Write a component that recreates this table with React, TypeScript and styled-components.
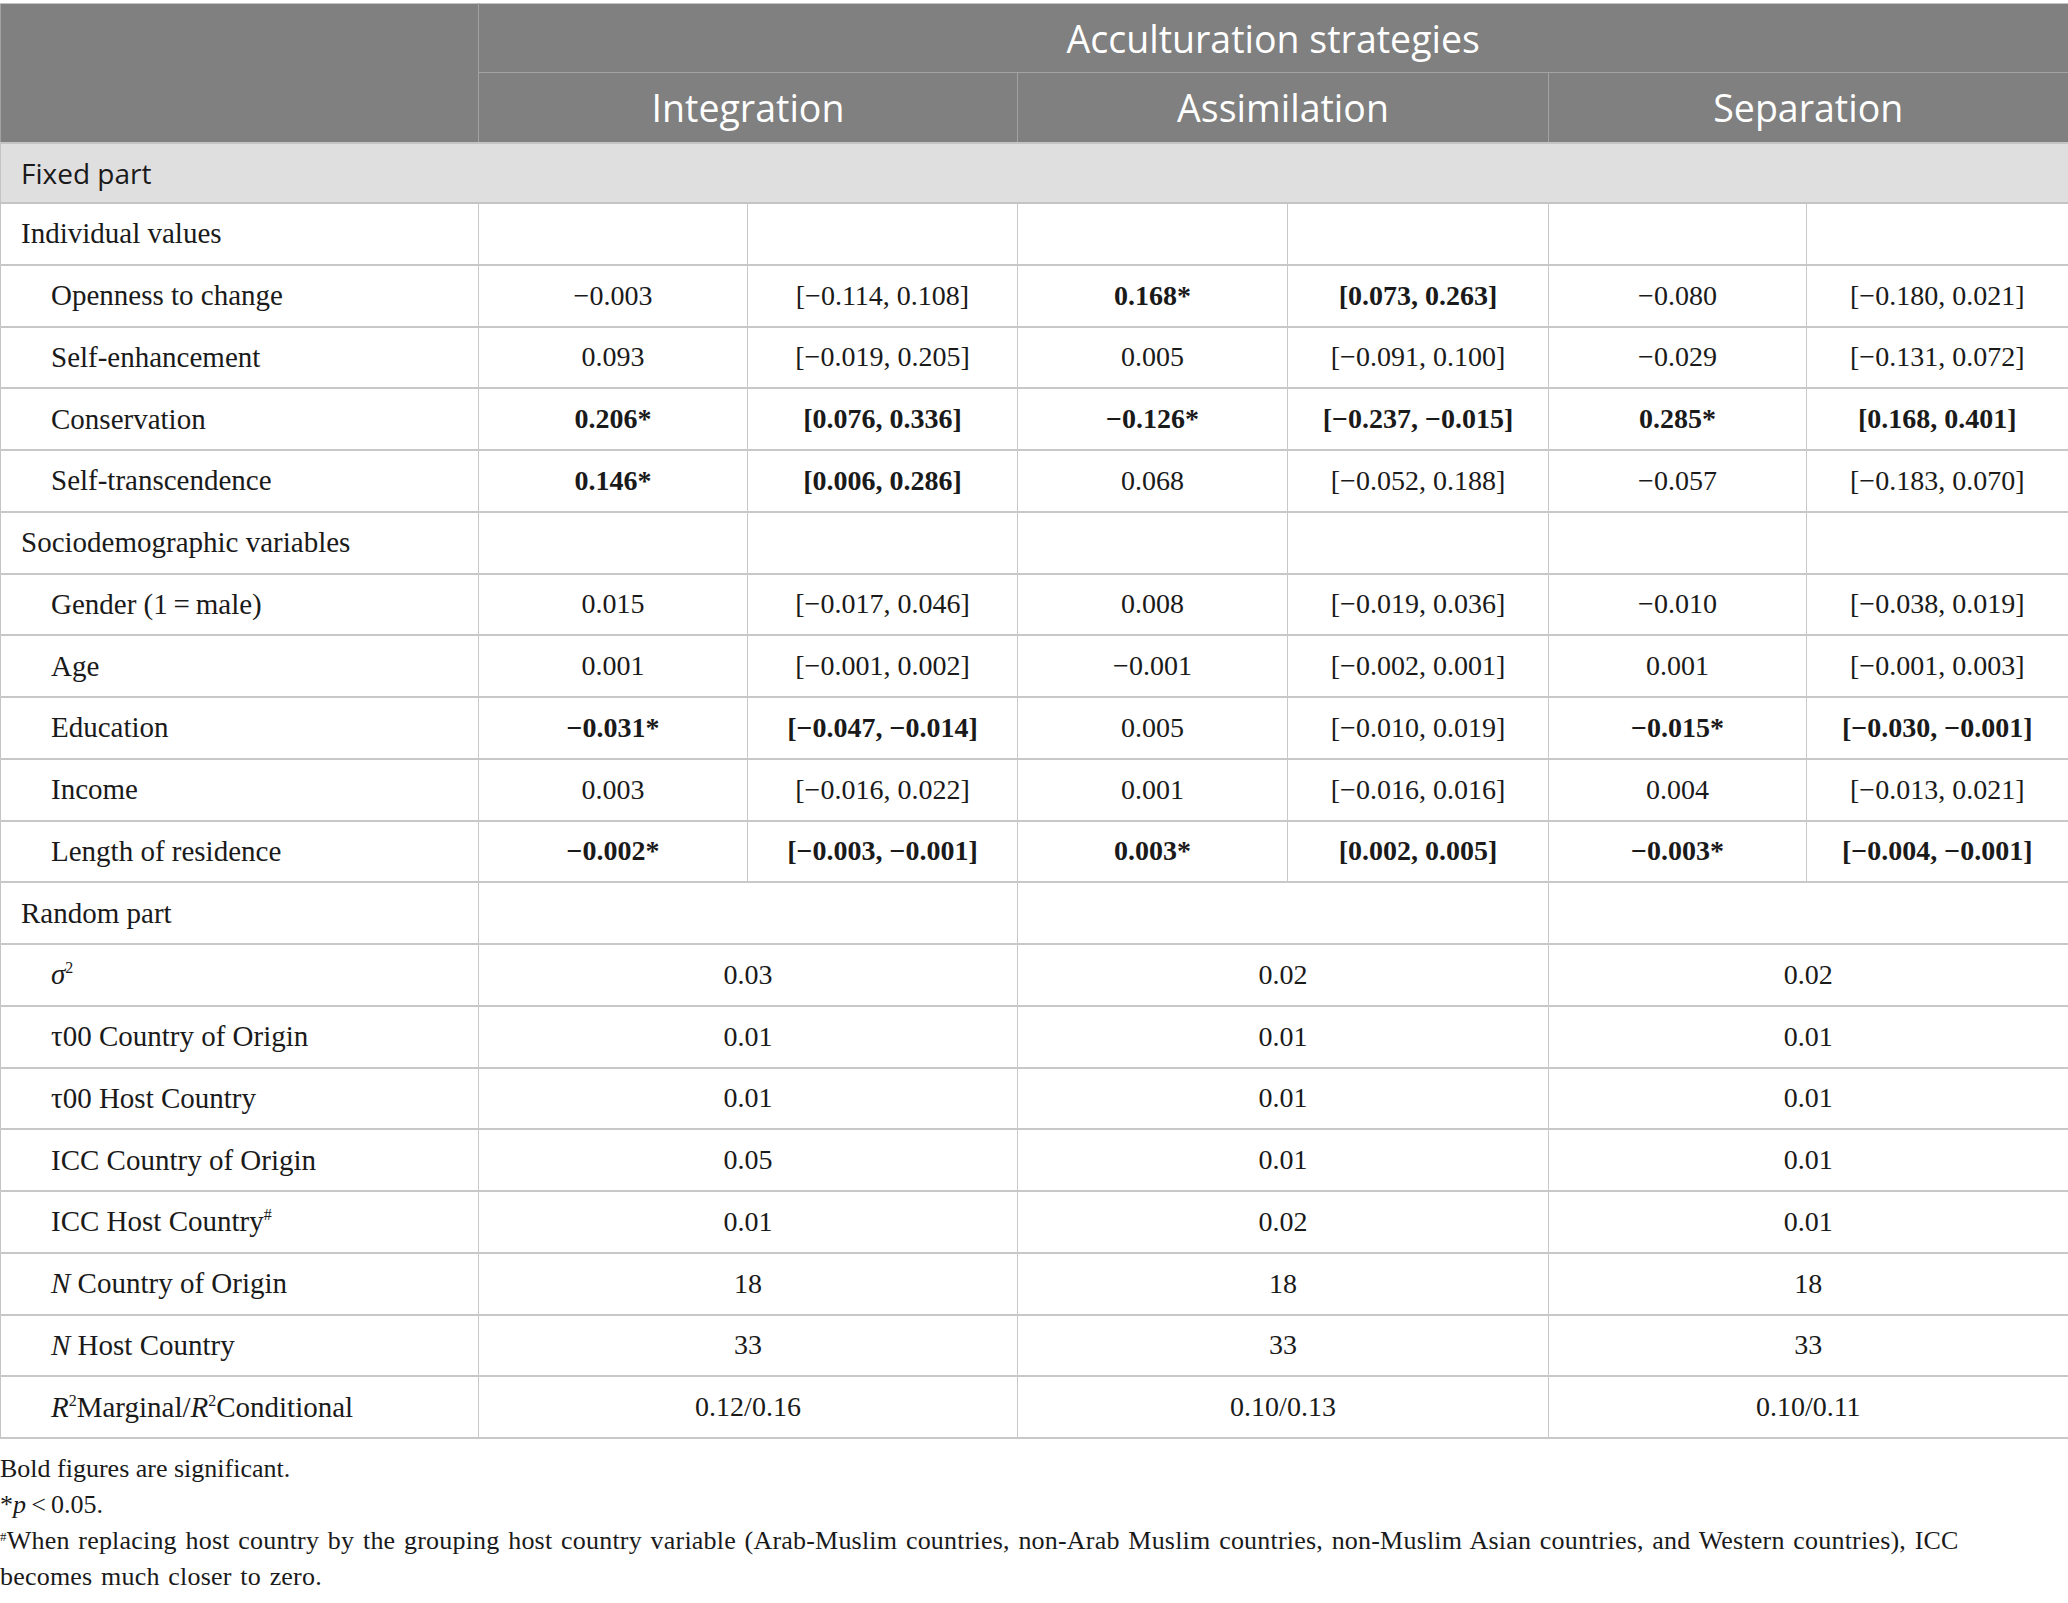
import React from 'react'
import styled, { createGlobalStyle } from 'styled-components'

const GlobalStyle = createGlobalStyle`
  html, body {
    margin: 0;
    padding: 0;
    background: #ffffff;
  }
`

const Page = styled.div`
  width: 2068px;
  padding-top: 3px;
  background: #ffffff;
`

const Table = styled.table`
  width: 2068px;
  border-collapse: collapse;
  table-layout: fixed;
  border: 1px solid #c4c4c4;
  border-right-width: 2px;
  border-bottom-width: 2px;
`

const HeadCell = styled.th<{ $row?: number }>`
  background: #7f807f;
  color: #ffffff;
  font-family: 'Open Sans', 'Noto Sans', sans-serif;
  font-size: 37.5px;
  font-weight: 400;
  text-align: center;
  vertical-align: middle;
  padding: 0;
  height: ${({ $row }) => ($row === 1 ? '68px' : '69px')};
  border: 1px solid #a3a3a3;
  border-top-color: #c4c4c4;
`

const SectionCell = styled.td`
  background: #e0dfe0;
  color: #1a1a1a;
  font-family: 'Open Sans', 'Noto Sans', sans-serif;
  font-size: 28px;
  font-weight: 400;
  height: 58px;
  padding: 0 0 0 20px;
  border-top: 2px solid #c4c4c4;
  border-bottom: 2px solid #c4c4c4;
`

const LabelCell = styled.td<{ $indent?: boolean }>`
  font-family: 'Liberation Serif', 'Times New Roman', serif;
  font-size: 29px;
  color: #1a1a1a;
  height: 59.75px;
  padding: 0 0 0 ${({ $indent }) => ($indent ? '50px' : '20px')};
  white-space: nowrap;
  vertical-align: middle;
  border-bottom: 2px solid #c8c8c8;
  border-right: 1px solid #c8c8c8;
`

const ValueCell = styled.td<{ $bold?: boolean }>`
  font-family: 'Liberation Serif', 'Times New Roman', serif;
  font-size: 28px;
  font-weight: ${({ $bold }) => ($bold ? 700 : 400)};
  color: #1a1a1a;
  text-align: center;
  vertical-align: middle;
  white-space: nowrap;
  padding: 0;
  height: 59.75px;
  border-bottom: 2px solid #c8c8c8;
  border-right: 1px solid #c8c8c8;
`

const Sup = styled.sup`
  font-size: 0.55em;
  line-height: 0;
  vertical-align: 0.7em;
`

const Notes = styled.div`
  padding-top: 12px;
  font-family: 'Liberation Serif', 'Times New Roman', serif;
  font-size: 26px;
  line-height: 36px;
  color: #1a1a1a;
`

const Note = styled.div<{ $loose?: boolean }>`
  max-width: ${({ $loose }) => ($loose ? '2030px' : 'none')};
  letter-spacing: ${({ $loose }) => ($loose ? '0.2px' : 'normal')};
  word-spacing: ${({ $loose }) => ($loose ? '2px' : 'normal')};
`

const NoteMark = styled.sup`
  font-size: 0.5em;
  line-height: 0;
  vertical-align: 0.6em;
`

type ValueRow = {
  label: React.ReactNode
  cells: string[]
  bold: [boolean, boolean, boolean]
}

type RandomRow = {
  label: React.ReactNode
  values: [string, string, string]
}

const individualRows: ValueRow[] = [
  {
    label: 'Openness to change',
    cells: ['−0.003', '[−0.114, 0.108]', '0.168*', '[0.073, 0.263]', '−0.080', '[−0.180, 0.021]'],
    bold: [false, true, false],
  },
  {
    label: 'Self-enhancement',
    cells: ['0.093', '[−0.019, 0.205]', '0.005', '[−0.091, 0.100]', '−0.029', '[−0.131, 0.072]'],
    bold: [false, false, false],
  },
  {
    label: 'Conservation',
    cells: ['0.206*', '[0.076, 0.336]', '−0.126*', '[−0.237, −0.015]', '0.285*', '[0.168, 0.401]'],
    bold: [true, true, true],
  },
  {
    label: 'Self-transcendence',
    cells: ['0.146*', '[0.006, 0.286]', '0.068', '[−0.052, 0.188]', '−0.057', '[−0.183, 0.070]'],
    bold: [true, false, false],
  },
]

const socioRows: ValueRow[] = [
  {
    label: 'Gender (1\u2009=\u2009male)',
    cells: ['0.015', '[−0.017, 0.046]', '0.008', '[−0.019, 0.036]', '−0.010', '[−0.038, 0.019]'],
    bold: [false, false, false],
  },
  {
    label: 'Age',
    cells: ['0.001', '[−0.001, 0.002]', '−0.001', '[−0.002, 0.001]', '0.001', '[−0.001, 0.003]'],
    bold: [false, false, false],
  },
  {
    label: 'Education',
    cells: ['−0.031*', '[−0.047, −0.014]', '0.005', '[−0.010, 0.019]', '−0.015*', '[−0.030, −0.001]'],
    bold: [true, false, true],
  },
  {
    label: 'Income',
    cells: ['0.003', '[−0.016, 0.022]', '0.001', '[−0.016, 0.016]', '0.004', '[−0.013, 0.021]'],
    bold: [false, false, false],
  },
  {
    label: 'Length of residence',
    cells: ['−0.002*', '[−0.003, −0.001]', '0.003*', '[0.002, 0.005]', '−0.003*', '[−0.004, −0.001]'],
    bold: [true, true, true],
  },
]

const randomRows: RandomRow[] = [
  {
    label: (
      <>
        <i>σ</i>
        <Sup>2</Sup>
      </>
    ),
    values: ['0.03', '0.02', '0.02'],
  },
  { label: 'τ00 Country of Origin', values: ['0.01', '0.01', '0.01'] },
  { label: 'τ00 Host Country', values: ['0.01', '0.01', '0.01'] },
  { label: 'ICC Country of Origin', values: ['0.05', '0.01', '0.01'] },
  {
    label: (
      <>
        ICC Host Country<Sup>#</Sup>
      </>
    ),
    values: ['0.01', '0.02', '0.01'],
  },
  {
    label: (
      <>
        <i>N</i> Country of Origin
      </>
    ),
    values: ['18', '18', '18'],
  },
  {
    label: (
      <>
        <i>N</i> Host Country
      </>
    ),
    values: ['33', '33', '33'],
  },
  {
    label: (
      <>
        <i>R</i>
        <Sup>2</Sup>Marginal/<i>R</i>
        <Sup>2</Sup>Conditional
      </>
    ),
    values: ['0.12/0.16', '0.10/0.13', '0.10/0.11'],
  },
]

const colWidths = [478, 269, 270, 270, 261, 258, 262]

function renderValueRow(row: ValueRow) {
  return (
    <tr key={row.cells.join('|')}>
      <LabelCell $indent>{row.label}</LabelCell>
      {row.cells.map((c, i) => (
        <ValueCell key={i} $bold={row.bold[Math.floor(i / 2)]}>
          {c}
        </ValueCell>
      ))}
    </tr>
  )
}

function CategoryRow({ label }: { label: string }) {
  return (
    <tr>
      <LabelCell>{label}</LabelCell>
      {[0, 1, 2, 3, 4, 5].map((i) => (
        <ValueCell key={i} />
      ))}
    </tr>
  )
}

export default function App() {
  return (
    <Page>
      <GlobalStyle />
      <Table>
        <colgroup>
          {colWidths.map((w, i) => (
            <col key={i} style={{ width: w }} />
          ))}
        </colgroup>
        <thead>
          <tr>
            <HeadCell rowSpan={2} />
            <HeadCell colSpan={6} $row={1}>
              Acculturation strategies
            </HeadCell>
          </tr>
          <tr>
            <HeadCell colSpan={2} $row={2}>
              Integration
            </HeadCell>
            <HeadCell colSpan={2} $row={2}>
              Assimilation
            </HeadCell>
            <HeadCell colSpan={2} $row={2}>
              Separation
            </HeadCell>
          </tr>
        </thead>
        <tbody>
          <tr>
            <SectionCell colSpan={7}>Fixed part</SectionCell>
          </tr>
          <CategoryRow label="Individual values" />
          {individualRows.map(renderValueRow)}
          <CategoryRow label="Sociodemographic variables" />
          {socioRows.map(renderValueRow)}
          <tr>
            <LabelCell>Random part</LabelCell>
            <ValueCell colSpan={2} />
            <ValueCell colSpan={2} />
            <ValueCell colSpan={2} />
          </tr>
          {randomRows.map((row, idx) => (
            <tr key={idx}>
              <LabelCell $indent>{row.label}</LabelCell>
              {row.values.map((v, i) => (
                <ValueCell key={i} colSpan={2}>
                  {v}
                </ValueCell>
              ))}
            </tr>
          ))}
        </tbody>
      </Table>
      <Notes>
        <Note>Bold figures are significant.</Note>
        <Note>
          *<i>p</i>
          {'\u2009<\u20090.05.'}
        </Note>
        <Note $loose>
          <NoteMark>#</NoteMark>When replacing host country by the grouping host country variable (Arab-Muslim
          countries, non-Arab Muslim countries, non-Muslim Asian countries, and Western countries), ICC becomes much
          closer to zero.
        </Note>
      </Notes>
    </Page>
  )
}
